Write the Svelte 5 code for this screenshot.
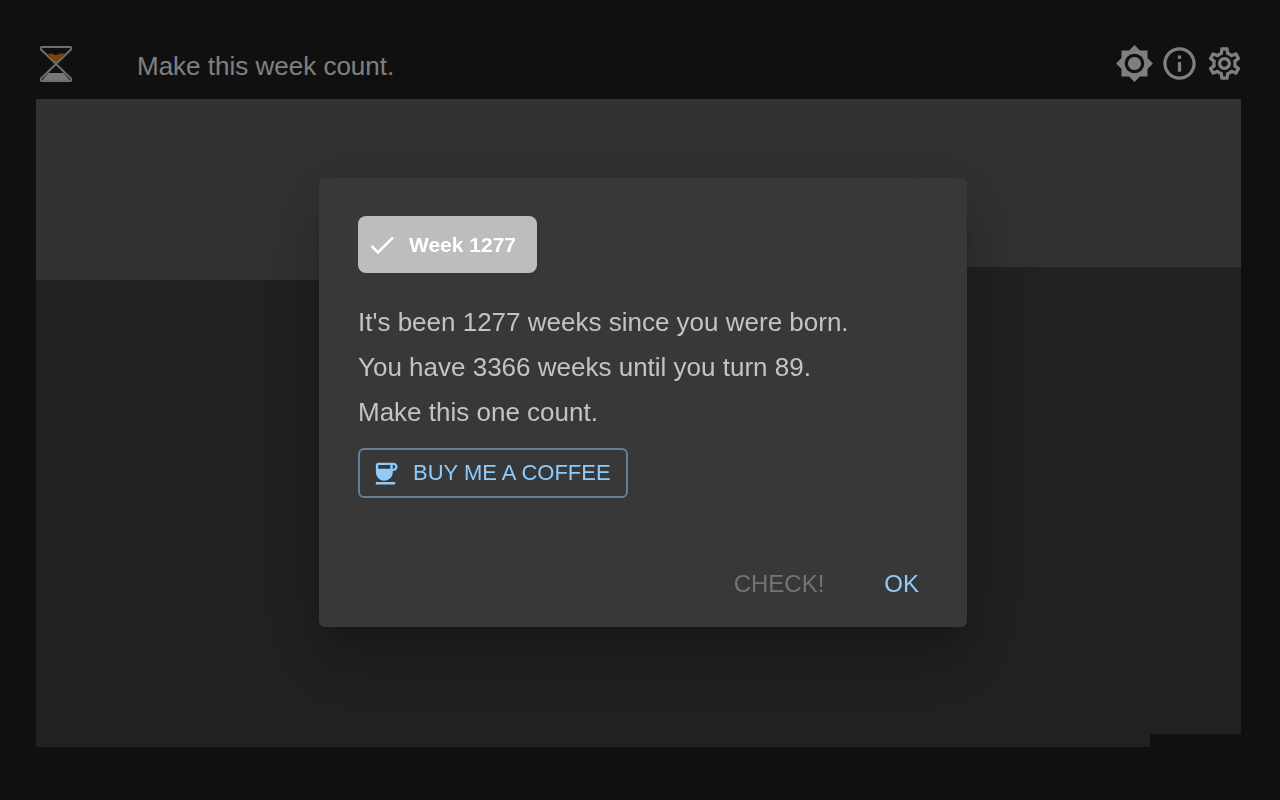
<script>
  const columns = 93;
  const weeksLived = 1277;
  const weeksLeft = 3366;
  const targetAge = 89;
  const total = weeksLived + weeksLeft;

  const livedRows = Math.floor(weeksLived / columns);
  const livedRest = weeksLived % columns;
  const fullRows = Math.floor(total / columns);
  const lastRest = total % columns;

  let open = $state(true);
</script>

{#snippet icon(d, size)}
  <svg class={size} viewBox="0 0 24 24" aria-hidden="true"><path {d} /></svg>
{/snippet}

<div class="page">
  <header>
    <svg class="logo" viewBox="0 0 36 40" aria-hidden="true">
      <path class="sand-top" d="M10 10C12.500 9 14 9.500 16 10.500C18 11.500 19.500 11 21 10C23 9 25 10 27 9.500L18 19Z" />
      <path class="sand-bottom" d="M10.500 29H25.500L32 36.500H4Z" />
      <path class="glass" d="M4.500 3H31.500Q34 3 33 5.500L3 34.500Q2 37 4.500 37H31.500Q34 37 33 34.500L3 5.500Q2 3 4.500 3Z" />
    </svg>
    <h1>Make this week count.</h1>
    <nav>
      <button aria-label="Theme">{@render icon('M20 8.69V4h-4.69L12 .69 8.69 4H4v4.69L.69 12 4 15.31V20h4.69L12 23.31 15.31 20H20v-4.69L23.31 12 20 8.69zM12 18c-3.31 0-6-2.69-6-6s2.69-6 6-6 6 2.69 6 6-2.69 6-6 6zm0-10c-2.21 0-4 1.79-4 4s1.79 4 4 4 4-1.79 4-4-1.79-4-4-4z', 'large')}</button>
      <button aria-label="About">{@render icon('M11 7h2v2h-2zm0 4h2v6h-2zm1-9C6.48 2 2 6.48 2 12s4.48 10 10 10 10-4.48 10-10S17.52 2 12 2zm0 18c-4.41 0-8-3.59-8-8s3.59-8 8-8 8 3.59 8 8-3.59 8-8 8z', 'large')}</button>
      <button aria-label="Settings">{@render icon('M19.43 12.98c.04-.32.07-.64.07-.98 0-.34-.03-.66-.07-.98l2.11-1.65c.19-.15.24-.42.12-.64l-2-3.46c-.09-.16-.26-.25-.44-.25-.06 0-.12.01-.17.03l-2.49 1c-.52-.4-1.08-.73-1.69-.98l-.38-2.65C14.46 2.18 14.25 2 14 2h-4c-.25 0-.46.18-.49.42l-.38 2.65c-.61.25-1.17.59-1.69.98l-2.49-1c-.06-.02-.12-.03-.18-.03-.17 0-.34.09-.43.25l-2 3.46c-.13.22-.07.49.12.64l2.11 1.65c-.04.32-.07.65-.07.98 0 .33.03.66.07.98l-2.11 1.65c-.19.15-.24.42-.12.64l2 3.46c.09.16.26.25.44.25.06 0 .12-.01.17-.03l2.49-1c.52.4 1.08.73 1.69.98l.38 2.65c.03.24.24.42.49.42h4c.25 0 .46-.18.49-.42l.38-2.65c.61-.25 1.17-.59 1.69-.98l2.49 1c.06.02.12.03.18.03.17 0 .34-.09.43-.25l2-3.46c.12-.22.07-.49-.12-.64l-2.11-1.65zm-1.98-1.71c.04.31.05.52.05.73 0 .21-.02.43-.05.73l-.14 1.13.89.7 1.08.84-.7 1.21-1.27-.51-1.04-.42-.9.68c-.43.32-.84.56-1.25.73l-1.06.43-.16 1.13-.2 1.35h-1.4l-.19-1.35-.16-1.13-1.06-.43c-.43-.18-.83-.41-1.23-.71l-.91-.7-1.06.43-1.27.51-.7-1.21 1.08-.84.89-.7-.14-1.13c-.03-.31-.05-.54-.05-.74s.02-.43.05-.73l.14-1.13-.89-.7-1.08-.84.7-1.21 1.27.51 1.04.42.9-.68c.43-.32.84-.56 1.25-.73l1.06-.43.16-1.13.2-1.35h1.39l.19 1.35.16 1.13 1.06.43c.43.18.83.41 1.23.71l.91.7 1.06-.43 1.27-.51.7 1.21-1.07.85-.89.7.14 1.13zM12 8c-2.21 0-4 1.79-4 4s1.79 4 4 4 4-1.79 4-4-1.79-4-4-4zm0 6c-1.1 0-2-.9-2-2s.9-2 2-2 2 .9 2 2-.9 2-2 2z', 'large')}</button>
    </nav>
  </header>

  <main>
    <div class="lived" style:aspect-ratio="{columns} / {livedRows}"></div>
    <div class="ahead" style:aspect-ratio="{columns} / 1">
      <div class="lived part" style:width="{(livedRest / columns) * 100}%"></div>
    </div>
    <div class="ahead" style:aspect-ratio="{columns} / {fullRows - livedRows - 1}"></div>
    <div class="ahead" style:aspect-ratio="{lastRest} / 1" style:width="{(lastRest / columns) * 100}%"></div>
  </main>
</div>

{#if open}
  <div class="backdrop">
    <div class="dialog" role="dialog" aria-modal="true" aria-labelledby="week-title">
      <div class="content">
        <div class="week">
          {@render icon('M9 16.17 4.83 12l-1.42 1.41L9 19 21 7l-1.41-1.41z', 'medium')}
          <h2 id="week-title">Week {weeksLived}</h2>
        </div>
        <div class="message">
          <p>It's been {weeksLived} weeks since you were born.</p>
          <p>You have {weeksLeft} weeks until you turn {targetAge}.</p>
          <p>Make this one count.</p>
        </div>
        <a class="coffee" href="#coffee">
          {@render icon('M18.5 3H6c-1.1 0-2 .9-2 2v5.71c0 3.83 2.95 7.18 6.78 7.29 3.96.12 7.22-3.06 7.22-7v-1h.5c1.93 0 3.5-1.57 3.5-3.5S20.43 3 18.5 3zM16 5v3H6V5h10zm2.5 3H18V5h.5c.83 0 1.5.67 1.5 1.5S19.33 8 18.5 8zM4 19h16v2H4v-2z', 'small')}
          <span>BUY ME A COFFEE</span>
        </a>
      </div>
      <div class="actions">
        <button disabled>CHECK!</button>
        <button onclick={() => (open = false)}>OK</button>
      </div>
    </div>
  </div>
{/if}

<style>
  :global(body) {
    margin: 0;
    background: #212121;
    color: #fff;
    font-family: "Liberation Sans", Arial, sans-serif;
  }
  h1, h2, p { margin: 0; font-weight: 400; }
  button {
    border: 0;
    padding: 0;
    background: none;
    color: inherit;
    font: inherit;
    cursor: pointer;
  }
  svg { display: block; flex: none; fill: currentColor; }
  .small { width: 29px; height: 29px; }
  .medium { width: 32px; height: 32px; }
  .large { width: 39px; height: 39px; }

  .page { padding: 33px 39px 52px 36px; }
  header {
    display: flex;
    align-items: center;
    height: 66px;
    padding-left: 2px;
  }
  .logo { width: 36px; height: 40px; margin-bottom: 4px; }
  .glass { fill: none; stroke: #dcdcdc; stroke-width: 2; stroke-linejoin: round; }
  .sand-top { fill: #ff8a00; }
  .sand-bottom { fill: #f0f0f0; }
  h1 { flex: 1; margin-left: 63px; font-size: 26px; line-height: 40px; }
  nav { display: flex; gap: 6px; margin: 0 -3px 6px 0; }

  .lived { background: #646464; }
  .ahead { background: #434343; }
  .part { height: 100%; }

  .backdrop {
    position: fixed;
    inset: 0;
    display: flex;
    align-items: center;
    justify-content: center;
    box-sizing: border-box;
    padding: 5px 0 0 6px;
    background: rgb(0 0 0 / 0.5);
  }
  .dialog {
    box-sizing: border-box;
    width: 100%;
    max-width: 648px;
    border-radius: 6px;
    background: #383838;
    box-shadow:
      0 18px 24px -11px rgb(0 0 0 / 0.2),
      0 39px 62px 5px rgb(0 0 0 / 0.14),
      0 15px 75px 13px rgb(0 0 0 / 0.12);
  }
  .content {
    display: flex;
    flex-direction: column;
    align-items: flex-start;
    padding: 38px 39px 56px;
  }
  .week {
    display: flex;
    align-items: center;
    gap: 11px;
    height: 57px;
    padding: 0 21px 0 8px;
    border-radius: 8px;
    background: #bdbdbd;
  }
  h2 { font-size: 21px; font-weight: 700; line-height: 32px; }
  .message {
    margin: 27px 0 13px;
    color: #c3c3c3;
    font-size: 26px;
    line-height: 45px;
  }
  .coffee {
    display: flex;
    align-items: center;
    gap: 13px;
    box-sizing: border-box;
    height: 50px;
    padding: 0 15px 0 11px;
    border: 2px solid #648099;
    border-radius: 6px;
    color: #90caf9;
    font-size: 22px;
    text-decoration: none;
  }
  .actions {
    display: flex;
    justify-content: flex-end;
    gap: 34px;
    padding: 0 35px 13px;
  }
  .actions button {
    height: 60px;
    padding: 0 13px;
    color: #90caf9;
    font-size: 24px;
  }
  .actions button:disabled { color: #747474; cursor: default; }
</style>
